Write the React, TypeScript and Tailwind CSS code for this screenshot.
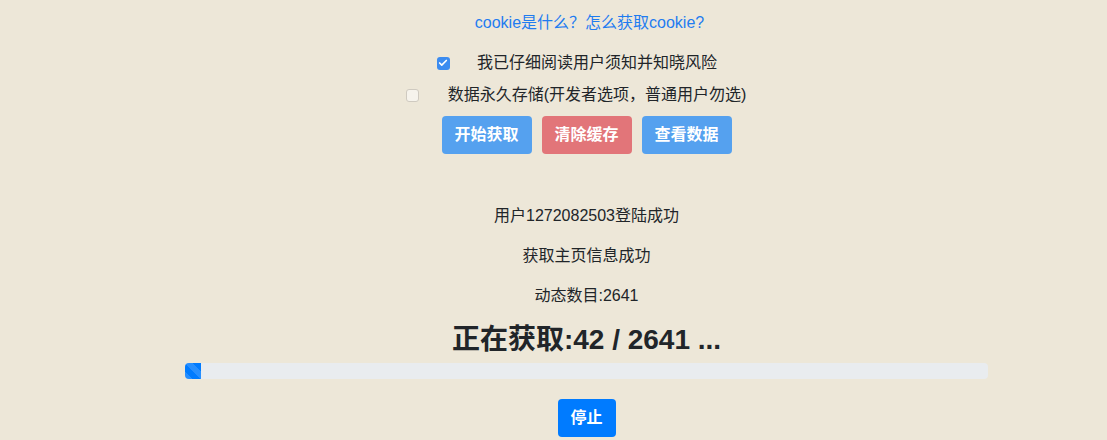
import { Check } from "lucide-react";

const font = "font-['Liberation_Sans','Noto_Sans_CJK_SC',sans-serif]";

const Checkbox = ({ checked }: { checked: boolean }) =>
  checked ? (
    <span className="w-[13px] h-[13px] rounded-[3px] bg-[#3c8cf0] flex items-center justify-center shrink-0">
      <Check className="w-[10px] h-[10px] text-white" strokeWidth={4} />
    </span>
  ) : (
    <span className="w-[13px] h-[13px] rounded-[3px] bg-[#f6f3ec] border border-[#cfcac0] shrink-0" />
  );

const App = () => {
  const done = 42;
  const total = 2641;

  return (
    <div className={`min-h-[440px] w-full bg-[#ede7d8] text-[#212529] ${font}`}>
      <div className="w-[803px] ml-[185px] pt-[11px] flex flex-col items-center text-center">
        {/* cookie help link */}
        <a className="pl-[6px] text-base leading-6 text-[#1f7cf0]">cookie是什么？怎么获取cookie?</a>

        <label className="mt-4 flex items-center gap-[27px] pr-[19px] text-base leading-6">
          <Checkbox checked />
          <span>我已仔细阅读用户须知并知晓风险</span>
        </label>
        <label className="mt-2 flex items-center gap-[29px] pr-[21px] text-base leading-6">
          <Checkbox checked={false} />
          <span>数据永久存储(开发者选项，普通用户勿选)</span>
        </label>

        <div className="mt-[9px] flex gap-[10px]">
          <button className="w-[90px] h-[38px] rounded bg-[#55a1ef] text-white text-base font-semibold">开始获取</button>
          <button className="w-[90px] h-[38px] rounded bg-[#e27579] text-white text-base font-semibold">清除缓存</button>
          <button className="w-[90px] h-[38px] rounded bg-[#55a1ef] text-white text-base font-semibold">查看数据</button>
        </div>

        <p className="mt-[50px] text-base leading-6">用户1272082503登陆成功</p>
        <p className="mt-4 text-base leading-6">获取主页信息成功</p>
        <p className="mt-4 text-base leading-6">动态数目:{total}</p>

        <h3 className="mt-[15px] text-[28px] leading-[34px] font-bold">
          正在获取:{done} / {total} ...
        </h3>

        <div className="mt-[6px] w-full h-4 rounded bg-[#e9ecef] overflow-hidden flex">
          <div className="w-[16px] h-full bg-[#007bff] bg-[linear-gradient(45deg,rgba(255,255,255,.15)_25%,transparent_25%,transparent_50%,rgba(255,255,255,.15)_50%,rgba(255,255,255,.15)_75%,transparent_75%,transparent)] bg-[length:16px_16px]" />
        </div>

        <button className="mt-5 w-[58px] h-[38px] rounded bg-[#007bff] text-white text-base font-semibold">停止</button>
      </div>
    </div>
  );
};

export default App;
